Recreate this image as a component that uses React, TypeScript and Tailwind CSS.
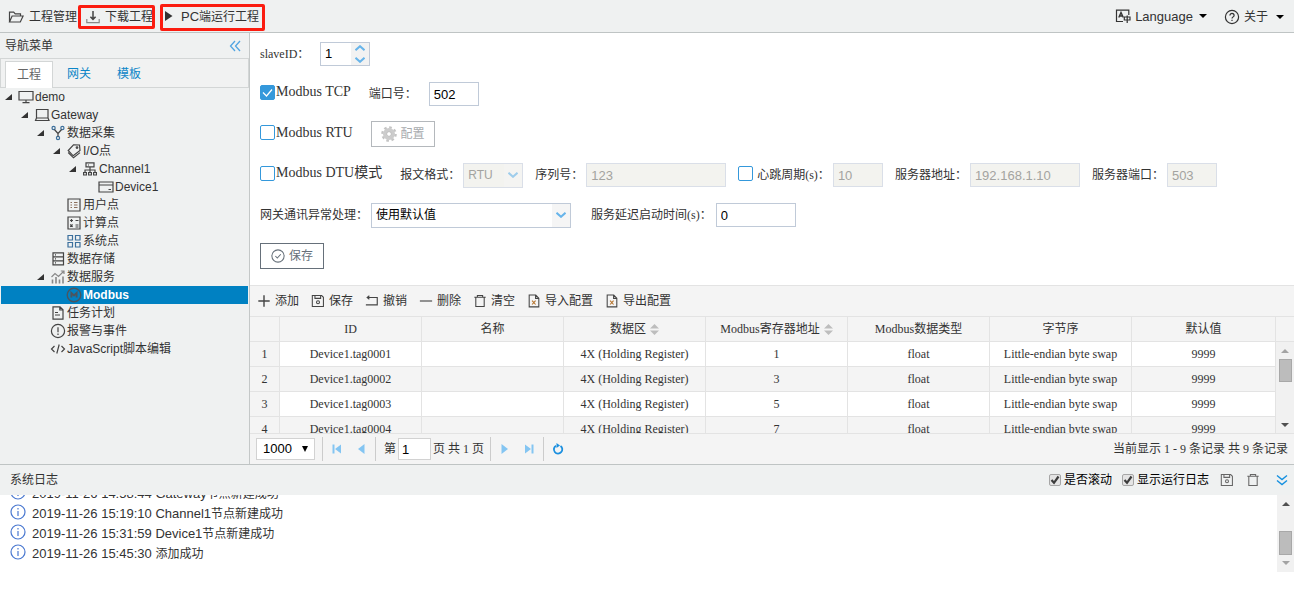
import type { ReactNode } from "react";

type IconProps = { children: ReactNode; className?: string; size?: "sm" | "md" };

function Icon({ children, className = "", size = "md" }: IconProps) {
  return (
    <svg
      viewBox="0 0 16 16"
      fill="none"
      stroke="currentColor"
      strokeWidth="1.2"
      aria-hidden="true"
      className={`${size === "md" ? "size-4" : "size-3.5"} shrink-0 ${className}`}
    >
      {children}
    </svg>
  );
}

const folder = <path d="M1.5 13V3.2h4.2l1.5 1.6h5.3v2M1.5 13l2.6-6h11l-2.8 6z" />;
const download = (
  <>
    <path d="M8 2v8M5.4 7.8 8 10.4l2.600-2.600" strokeWidth="1.5" />
    <path d="M1.800 10v3.600h12.400V10" stroke="#888" />
  </>
);
const monitor = <path d="M1 2.500h14v8.500H1zM8 11v2.500M4.500 13.700h7" />;
const laptop = <path d="M2.500 2.500h11.500v8.500h-11.500zM2.500 11 1.500 13.500h13.500l-1-2.500" />;
const fork = (
  <>
    <circle cx="3.600" cy="3" r="1.600" stroke="#3b6f9c" />
    <circle cx="12.400" cy="3" r="1.600" stroke="#3b6f9c" />
    <circle cx="8" cy="13" r="1.600" stroke="#3b6f9c" />
    <path d="M4.400 4.500 8 8.500l3.600-4M8 8.500v2.900" />
  </>
);
const tags = (
  <>
    <path d="M7.500 1.800 13.500 2l.5 5.500-6.800 5.300L2.200 7.500z" />
    <path d="M2.200 9.500 7.500 14.800l6.500-5.200" />
    <circle cx="11" cy="4.600" r=".8" />
  </>
);
const channel = (
  <path d="M4 1.800h8v4H4zM6 4h1M8 5.800V9M3 11.500V9h10v2.500M8 9v2.500M1.600 11.500h2.800V14H1.600zM6.600 11.500h2.800V14H6.600zM11.600 11.500h2.800V14h-2.800z" />
);
const device = <path d="M1 3h14v10H1zM1 6h14M10.500 10.500H13" />;
const userPoint = (
  <>
    <path d="M2 2h12v12H2z" />
    <path d="M4.500 5.500H6M4.500 8H6M4.500 10.500H6M8 5.500h3.500M8 8h3.500M8 10.500h3.500" stroke="#8b6f5c" />
  </>
);
const calcPoint = <path d="M2 2h12v12H2zM4 5.500h3M5.500 4v3M9.500 5.500h3M4.200 9.500l2.400 2.400M6.600 9.500l-2.400 2.400M9.500 10h3M9.500 12h3" />;
const systemPoint = <path stroke="#3b6f9c" d="M2 2.500h4.500V7H2zM9.500 2.500H14V7H9.500zM2 9.500h4.500V14H2zM9.500 9.500H14V14H9.500z" />;
const storage = <path d="M3 1.800h10.500v12H3zM3 5.800h10.500M3 9.800h10.500M5 3.800h1M5 7.800h1M5 11.800h1" />;
const service = (
  <g stroke="#888">
    <path d="M1.500 8 5 4.500l3.500 3L14 2M10.800 2H14v3" />
    <path d="M2.500 14.500v-4M6 14.500V8M9.500 14.500v-4M13 14.500V7.500" strokeWidth="1.600" />
  </g>
);
const modbus = (
  <g stroke="#4a5560">
    <circle cx="8" cy="8" r="6.800" strokeWidth="1.400" />
    <path d="M5.400 10.500v-4.500L8 8.500l2.600-2.500v4.500" strokeWidth="1.900" />
  </g>
);
const task = <path d="M3 1.800h7l3 3v9.400H3zM9.800 1.800V5H13M5 7.500h3M5 10h5" />;
const alarm = (
  <>
    <circle cx="8" cy="8" r="6.600" />
    <path d="M8 4.200v5M8 10.500v1.400" />
  </>
);
const code = <path d="M4.500 5 1.500 8l3 3M11.500 5l3 3-3 3M9.200 3.500l-2.400 9" />;
const disk = (
  <>
    <path d="M1.500 1.800h10.700l2 2v10.400H1.500zM4.500 1.800V5h6.500V1.800" />
    <circle cx="8" cy="9.500" r="1.700" />
  </>
);
const trash = <path d="M1.500 3.800h13M5 3.600V1.600h6v2M3.200 4v10.300h9.600V4" />;
const sheet = (
  <>
    <path d="M2.500 1.200h7.500l3.500 3.500v10h-11zM9.800 1.400V5h3.500" />
    <path d="M5.800 7.500l4 4.500M9.800 7.500l-4 4.500" stroke="#b5722a" />
  </>
);
const plus = <path d="M8 1.500v13M1.500 8h13" strokeWidth="1.600" />;
const minus = <path d="M1 8h14" strokeWidth="1.600" stroke="#666" />;
const undo = <path d="M2.500 4H14v8.500H1M5 2 2.500 4 5 6" strokeWidth="1.300" />;
const info = (
  <>
    <circle cx="8" cy="8" r="7" />
    <path d="M8 7v5M8 4v1.400" />
  </>
);
const help = (
  <>
    <circle cx="8" cy="8" r="6.600" />
    <path d="M5.900 6.400c0-2.800 4.200-2.800 4.200 0 0 1.500-2.100 1.500-2.100 3.200M8 10.800v1.300" />
  </>
);
const language = (
  <>
    <path d="M8 13.500H1.500V2.200h12.300V7" />
    <path d="M3.800 9.500 6 4.500l2.300 5M4.700 8h2.800" strokeWidth="1.400" />
    <path d="M9.300 9h5.700v3H9.300zM12.200 7.500V15" />
  </>
);
const okCircle = (
  <>
    <circle cx="8" cy="8" r="7" />
    <path d="m5 8 2.200 2.300L11.200 6" />
  </>
);

function Triangle({ dir, className = "" }: { dir: "up" | "down"; className?: string }) {
  return (
    <svg viewBox="0 0 8 4" aria-hidden="true" className={`h-1 w-2 shrink-0 ${className}`}>
      <path d={dir === "up" ? "M0 4 4 0l4 4z" : "M0 0h8L4 4z"} fill="currentColor" />
    </svg>
  );
}

function Chevron({ up = false }: { up?: boolean }) {
  return (
    <svg viewBox="0 0 10 6" fill="none" stroke="#67b4ea" strokeWidth="2" aria-hidden="true" className="h-1.5 w-2.5">
      <path d={up ? "M.5 5.200l4.500-4 4.500 4" : "M.5.800l4.500 4 4.500-4"} />
    </svg>
  );
}

function BlueCheck({ id, checked = false, label, serif = true }: { id: string; checked?: boolean; label: string; serif?: boolean }) {
  return (
    <div className={`flex items-center ${serif ? "-mt-1" : ""}`}>
      <span className={`relative flex ${serif ? "" : "-mt-1"}`}>
        <input
          id={id}
          type="checkbox"
          defaultChecked={checked}
          className="peer size-[15px] appearance-none rounded-xs border border-[#3498db] bg-white checked:bg-[#3498db]"
        />
        <svg viewBox="0 0 15 15" fill="none" stroke="#fff" strokeWidth="1.200" className="pointer-events-none absolute inset-0 hidden peer-checked:block">
          <path d="m3 7.500 3.500 3.500L12 4.500" />
        </svg>
      </span>
      <label htmlFor={id} className={serif ? "ml-px text-sm leading-6" : "ml-1 leading-6"}>
        {label}
      </label>
    </div>
  );
}

function Field({ id, value, width, disabled = false, label }: { id: string; value: string; width: string; disabled?: boolean; label?: string }) {
  return (
    <input
      id={id}
      aria-label={label}
      defaultValue={value}
      disabled={disabled}
      className={`h-6 border border-[#c0cad8] bg-white px-1 font-['Liberation_Sans'] text-[13px] text-black disabled:border-[#dadfe8] disabled:bg-[#f3f3ef] disabled:text-[#a3a3a0] ${width}`}
    />
  );
}

function Combo({ id, value, width, disabled = false }: { id: string; value: string; width: string; disabled?: boolean }) {
  return (
    <span className={`relative flex ${width}`}>
      <select
        id={id}
        disabled={disabled}
        className="h-[25px] w-full appearance-none border border-[#c0cad8] bg-white px-1 font-['Liberation_Sans','Noto_Sans_CJK_SC',sans-serif] text-xs text-black disabled:border-[#dadfe8] disabled:bg-[#f3f3ef] disabled:text-[#a3a3a0] disabled:opacity-100"
      >
        <option>{value}</option>
      </select>
      <span className={`pointer-events-none absolute inset-y-px right-px flex w-[18px] items-center justify-center bg-[#f5f5f5] ${disabled ? "opacity-60" : ""}`}>
        <Chevron />
      </span>
    </span>
  );
}

type Node = { depth: string; label: string; icon: ReactNode; open?: boolean; active?: boolean };

const tree: Node[] = [
  { depth: "pl-1", label: "demo", icon: monitor, open: true },
  { depth: "pl-5", label: "Gateway", icon: laptop, open: true },
  { depth: "pl-9", label: "数据采集", icon: fork, open: true },
  { depth: "pl-13", label: "I/O点", icon: tags, open: true },
  { depth: "pl-17", label: "Channel1", icon: channel, open: true },
  { depth: "pl-21", label: "Device1", icon: device },
  { depth: "pl-13", label: "用户点", icon: userPoint },
  { depth: "pl-13", label: "计算点", icon: calcPoint },
  { depth: "pl-13", label: "系统点", icon: systemPoint },
  { depth: "pl-9", label: "数据存储", icon: storage },
  { depth: "pl-9", label: "数据服务", icon: service, open: true },
  { depth: "pl-13", label: "Modbus", icon: modbus, active: true },
  { depth: "pl-9", label: "任务计划", icon: task },
  { depth: "pl-9", label: "报警与事件", icon: alarm },
  { depth: "pl-9", label: "JavaScript脚本编辑", icon: code },
];

function Header() {
  return (
    <header className="flex h-[33px] items-center border-b border-[#bfc4c4] bg-[#eff1f1] pt-px pl-2">
      <button className="flex items-center gap-1">
        <Icon className="text-[#444]">{folder}</Icon>
        <span className="ml-px">工程管理</span>
      </button>
      <button className="relative ml-2 flex items-center gap-1">
        <Icon className="text-[#444]">{download}</Icon>
        <span>下载工程</span>
        <span className="pointer-events-none absolute -top-1 -right-0.5 -bottom-1 -left-[7px] rounded-xs border-3 border-[#fb1c10]" />
      </button>
      <button className="relative ml-3 flex items-center gap-2">
        <svg viewBox="0 0 8 10" aria-hidden="true" className="h-2.5 w-2">
          <path d="M0 0v10l7.500-5z" fill="#333" />
        </svg>
        <span><span className="text-[13px]">PC</span>端运行工程</span>
        <span className="pointer-events-none absolute -top-1 -right-1.5 -bottom-1.5 -left-[5px] rounded-xs border-3 border-[#fb1c10]" />
      </button>
      <button className="ml-auto flex items-center">
        <Icon>{language}</Icon>
        <span className="ml-1 text-[13px]">Language</span>
        <Triangle dir="down" className="ml-1.5 text-black" />
      </button>
      <button className="mr-2.5 ml-[17px] flex items-center">
        <Icon>{help}</Icon>
        <span className="ml-1">关于</span>
        <Triangle dir="down" className="ml-2 text-black" />
      </button>
    </header>
  );
}

function Sidebar() {
  return (
    <aside className="w-[250px] shrink-0 border-r border-[#c4c8c8] bg-[#eff1f1]">
      <div className="flex h-[25px] items-center justify-between pr-2 pl-[5px]">
        <h2>导航菜单</h2>
        <button aria-label="收起导航菜单">
          <svg viewBox="0 0 12 12" fill="none" stroke="#51a5e2" strokeWidth="1.300" className="size-3">
            <path d="M6 1 1.500 6 6 11M11 1 6.500 6l4.500 5" />
          </svg>
        </button>
      </div>
      <div role="tablist" className="flex h-[30px] items-end gap-0.5 border border-[#d3d6d6] bg-[#f1f2f2] pl-1">
        <button role="tab" aria-selected="true" className="-mb-px h-[27px] w-12 border border-b-0 border-[#d3d6d6] bg-white text-[#666]">工程</button>
        <button role="tab" aria-selected="false" className="h-[26px] w-12 text-[#0c86c8]">网关</button>
        <button role="tab" aria-selected="false" className="h-[26px] w-12 text-[#0c86c8]">模板</button>
      </div>
      <ul role="tree">
        {tree.map((n) => (
          <li
            key={n.label}
            role="treeitem"
            aria-selected={!!n.active}
            className={`mx-px flex h-[18px] items-center leading-[18px] whitespace-nowrap ${n.depth} ${n.active ? "bg-[#0081c2] font-bold text-white" : ""}`}
          >
            <svg viewBox="0 0 7 6" aria-hidden="true" className="mr-1.5 h-1.5 w-[7px]">
              {n.open && <path d="M7 0v6H0z" fill="#333" />}
            </svg>
            <Icon className="text-[#444]">{n.icon}</Icon>
            <span className="ml-px">{n.label}</span>
          </li>
        ))}
      </ul>
    </aside>
  );
}

function SettingsForm() {
  return (
    <form className="flex flex-col gap-4 pt-[9px] pb-4 pl-2.5 whitespace-nowrap">
      <div className="flex h-6 items-center">
        <label htmlFor="slave" className="w-[60px]">slaveID：</label>
        <span className="flex h-6 w-[50px] border border-[#c0cad8]">
          <input id="slave" defaultValue="1" className="w-[30px] pl-1 font-['Liberation_Sans'] text-[13px] text-black" />
          <span className="flex flex-1 flex-col items-center justify-between bg-[#f2f2f2] py-0.5">
            <button type="button" aria-label="增加" className="flex"><Chevron up /></button>
            <button type="button" aria-label="减少" className="flex"><Chevron /></button>
          </span>
        </span>
      </div>
      <div className="flex h-6 items-center">
        <BlueCheck id="tcp" checked label="Modbus TCP" />
        <label htmlFor="port" className="mr-3 ml-[18px]">端口号：</label>
        <Field id="port" value="502" width="w-[50px]" />
      </div>
      <div className="flex h-[25px] items-center">
        <BlueCheck id="rtu" label="Modbus RTU" />
        <button type="button" disabled className="ml-[18px] flex h-[26px] w-16 items-center justify-center gap-1 self-end border border-[#b4b8bc] text-[#a8abae]">
          <svg viewBox="0 0 16 16" aria-hidden="true" className="size-4">
            <circle cx="8" cy="8" r="6.600" fill="none" stroke="#c4c4c4" strokeWidth="2.400" strokeDasharray="2.600 2.580" />
            <circle cx="8" cy="8" r="4.300" fill="none" stroke="#cccccc" strokeWidth="3.400" />
            <circle cx="8" cy="8" r="2.400" fill="#fff" stroke="#aaa" strokeWidth=".8" />
          </svg>
          <span>配置</span>
        </button>
      </div>
      <div className="flex h-6 items-center">
        <BlueCheck id="dtu" label="Modbus DTU模式" />
        <label htmlFor="format" className="mr-[3px] ml-[18px]">报文格式：</label>
        <Combo id="format" value="RTU" width="w-[60px]" disabled />
        <label htmlFor="serial" className="mr-[3px] ml-3">序列号：</label>
        <Field id="serial" value="123" width="w-[140px]" disabled />
        <span className="w-3" />
        <BlueCheck id="beat" label="心跳周期(s)：" serif={false} />
        <span className="w-[3px]" />
        <Field id="period" value="10" width="w-[50px]" disabled label="心跳周期" />
        <label htmlFor="address" className="mr-[3px] ml-3">服务器地址：</label>
        <Field id="address" value="192.168.1.10" width="w-[110px]" disabled />
        <label htmlFor="sport" className="mr-[3px] ml-3">服务器端口：</label>
        <Field id="sport" value="503" width="w-[50px]" disabled />
      </div>
      <div className="flex h-6 items-center">
        <label htmlFor="fallback" className="mr-[3px]">网关通讯异常处理：</label>
        <Combo id="fallback" value="使用默认值" width="w-[200px]" />
        <label htmlFor="delay" className="mr-1 ml-5">服务延迟启动时间(s)：</label>
        <Field id="delay" value="0" width="w-20" />
      </div>
      <button type="button" className="flex h-[26px] w-16 items-center justify-center gap-1 border border-[#66707a] text-[#66707a]">
        <Icon size="sm">{okCircle}</Icon>
        <span>保存</span>
      </button>
    </form>
  );
}

const actions = [
  { label: "添加", icon: plus },
  { label: "保存", icon: disk },
  { label: "撤销", icon: undo },
  { label: "删除", icon: minus },
  { label: "清空", icon: trash },
  { label: "导入配置", icon: sheet },
  { label: "导出配置", icon: sheet },
];

const columns = [
  { label: "ID", width: "w-[142px]" },
  { label: "名称", width: "w-[142px]" },
  { label: "数据区", width: "w-[142px]", sort: true },
  { label: "Modbus寄存器地址", width: "w-[142px]", sort: true },
  { label: "Modbus数据类型", width: "w-[142px]" },
  { label: "字节序", width: "w-[142px]" },
  { label: "默认值", width: "w-auto" },
];

const rows = [1, 2, 3, 4].map((n) => [
  `Device1.tag000${n}`,
  "",
  "4X (Holding Register)",
  String(2 * n - 1),
  "float",
  "Little-endian byte swap",
  "9999",
]);

function Grid() {
  return (
    <div className="flex h-[117px] overflow-hidden border-t border-[#e3e3e3]">
      <div className="min-w-0 flex-1">
        <table className="w-full table-fixed border-separate border-spacing-0 text-center leading-6">
          <colgroup>
            <col className="w-[30px]" />
            {columns.map((c) => <col key={c.label} className={c.width} />)}
          </colgroup>
          <thead>
            <tr className="h-[25px]">
              <th className="border-r border-b border-[#e3e3e3] p-0" />
              {columns.map((c) => (
                <th key={c.label} className="h-[25px] border-r border-b border-[#e3e3e3] p-0 font-normal whitespace-nowrap">
                  <span className="inline-flex h-6 items-center gap-1">
                    {c.label}
                    {c.sort && (
                      <svg viewBox="0 0 9 11" aria-hidden="true" className="h-[11px] w-[9px]">
                        <path d="M0 4.500 4.500 0 9 4.500zM0 6.500h9L4.500 11z" fill="#bdbdbd" />
                      </svg>
                    )}
                  </span>
                </th>
              ))}
            </tr>
          </thead>
          <tbody>
            {rows.map((r, i) => (
              <tr key={r[0]} className="h-[25px] bg-white even:bg-[#f4f4f4]">
                <td className="border-r border-b border-[#e3e3e3] bg-[#f4f4f4] p-0">{i + 1}</td>
                {r.map((cell, j) => (
                  <td key={columns[j].label} className="h-[25px] border-r border-b border-[#e3e3e3] p-0 whitespace-nowrap">{cell}</td>
                ))}
              </tr>
            ))}
          </tbody>
        </table>
      </div>
      <div className="flex w-[18px] flex-col">
        <div className="h-[25px] shrink-0 border-b border-[#e3e3e3]" />
        <div className="flex flex-1 flex-col items-center bg-[#f1f1f1] pt-[7px] pb-1.5">
          <Triangle dir="up" className="text-[#a3a3a3]" />
          <div className="mt-1.5 h-[23px] w-[13px] border border-[#a8a8a8] bg-[#bcbcbc]" />
          <Triangle dir="down" className="mt-auto text-[#505050]" />
        </div>
      </div>
    </div>
  );
}

function PageButton({ label, d }: { label: string; d: string }) {
  return (
    <button aria-label={label} className="flex w-6 justify-center">
      <svg viewBox="0 0 10 10" aria-hidden="true" className="size-2.5">
        <path d={d} fill="#84c5f2" />
      </svg>
    </button>
  );
}

function Separator() {
  return <span className="mx-0.5 h-6 w-px bg-[#cccccc]" />;
}

function Pager() {
  return (
    <div className="flex h-[31px] items-center border-t border-[#e3e3e3] px-1.5 whitespace-nowrap">
      <span className="relative mr-[5px] flex">
        <select aria-label="每页条数" className="h-[22px] w-[59px] appearance-none border border-[#d2d2d2] bg-white pl-1.5 font-['Liberation_Sans'] text-[13px] text-black">
          <option>1000</option>
        </select>
        <svg viewBox="0 0 6 6" aria-hidden="true" className="pointer-events-none absolute top-2 right-[7px] size-1.5">
          <path d="M0 0h6L3 6z" fill="#000" />
        </svg>
      </span>
      <Separator />
      <PageButton label="第一页" d="M.5.500h2v9h-2zM9 .500v9L3 5z" />
      <PageButton label="上一页" d="M8.500 0v10L2 5z" />
      <Separator />
      <label htmlFor="page" className="ml-1.5">第</label>
      <input id="page" defaultValue="1" className="mx-0.5 h-[22px] w-[33px] border border-[#d2d2d2] bg-white pl-[3px] font-['Liberation_Sans'] text-[13px] text-black" />
      <span className="mr-1">页 共 1 页</span>
      <Separator />
      <PageButton label="下一页" d="M1.500 0v10L8 5z" />
      <PageButton label="最后一页" d="M7.500.500h2v9h-2zM1 .500v9L7 5z" />
      <Separator />
      <button aria-label="刷新" className="ml-1.5">
        <svg viewBox="0 0 12 12" fill="none" stroke="#1b8fdf" strokeWidth="1.800" className="size-3">
          <path d="M8.500 2.900A4.200 4.200 0 1 1 4 2.700" />
          <path d="M4.500 0v5L8 2.500z" fill="#1b8fdf" stroke="none" />
        </svg>
      </button>
      <span className="ml-auto">当前显示 1 - 9 条记录 共 9 条记录</span>
    </div>
  );
}

function LogCheck({ id, label }: { id: string; label: string }) {
  return (
    <span className="flex items-center">
      <span className="relative flex">
        <input id={id} type="checkbox" defaultChecked className="peer size-3 appearance-none rounded-xs border border-[#a6a6a6] bg-[#e4e4e4]" />
        <svg viewBox="0 0 12 12" fill="none" stroke="#3c3c3c" strokeWidth="2.200" className="pointer-events-none absolute inset-0 hidden peer-checked:block">
          <path d="m2.500 6 2.500 2.800 4.500-6.300" />
        </svg>
      </span>
      <label htmlFor={id} className="ml-[3px] text-black">{label}</label>
    </span>
  );
}

const logs = [
  { time: "2019-11-26 14:58:44", node: "Gateway", text: "节点新建成功" },
  { time: "2019-11-26 15:19:10", node: "Channel1", text: "节点新建成功" },
  { time: "2019-11-26 15:31:59", node: "Device1", text: "节点新建成功" },
  { time: "2019-11-26 15:45:30", node: "", text: "添加成功" },
];

function LogPanel() {
  return (
    <section className="border-t border-[#bfc4c4]">
      <div className="flex h-[30px] items-center bg-[#eff1f1] pr-1.5 pl-2.5">
        <h2 className="mr-auto">系统日志</h2>
        <LogCheck id="scroll" label="是否滚动" />
        <span className="w-2.5" />
        <LogCheck id="runlog" label="显示运行日志" />
        <button aria-label="保存日志" className="ml-[11px]"><Icon size="sm" className="text-[#666]">{disk}</Icon></button>
        <button aria-label="清空日志" className="ml-3"><Icon size="sm" className="text-[#666]">{trash}</Icon></button>
        <button aria-label="收起日志" className="ml-4">
          <svg viewBox="0 0 12 12" fill="none" stroke="#1490e0" strokeWidth="1.400" className="size-3">
            <path d="m1 1.500 5 4 5-4M1 6.500l5 4 5-4" />
          </svg>
        </button>
      </div>
      <div className="flex h-[77px] bg-white">
        <ul className="flex flex-1 flex-col justify-end overflow-hidden pb-2 pl-2.5">
          {logs.map((l) => (
            <li key={l.time} className="flex h-5 shrink-0 items-center leading-5">
              <Icon className="mr-1.5 mb-1 text-[#4a78d0]">{info}</Icon>
              <p><span className="text-[13px]">{l.time} {l.node}</span>{l.text}</p>
            </li>
          ))}
        </ul>
        <div className="flex w-[17px] flex-col items-center bg-[#f1f1f1] pt-[7px] pb-[7px]">
          <Triangle dir="up" className="text-[#505050]" />
          <div className="mt-auto mb-1.5 h-6 w-[13px] border border-[#a8a8a8] bg-[#bcbcbc]" />
          <Triangle dir="down" className="text-[#a3a3a3]" />
        </div>
      </div>
    </section>
  );
}

export default function App() {
  return (
    <div className="min-h-screen bg-white font-['Liberation_Sans','Noto_Sans_CJK_SC',sans-serif] text-xs text-[#333]">
      <Header />
      <div className="flex">
        <Sidebar />
        <main className="min-w-0 flex-1 font-['Liberation_Serif','Noto_Sans_CJK_SC',serif]">
          <SettingsForm />
          <section className="bg-[#f4f4f4]">
            <div className="flex h-[31px] items-center gap-3 border-t border-[#e3e3e3] pl-[7px]">
              {actions.map((a) => (
                <button key={a.label} className="flex items-center gap-1">
                  <Icon size="sm" className="text-[#444]">{a.icon}</Icon>
                  <span>{a.label}</span>
                </button>
              ))}
            </div>
            <Grid />
            <Pager />
          </section>
        </main>
      </div>
      <LogPanel />
    </div>
  );
}
